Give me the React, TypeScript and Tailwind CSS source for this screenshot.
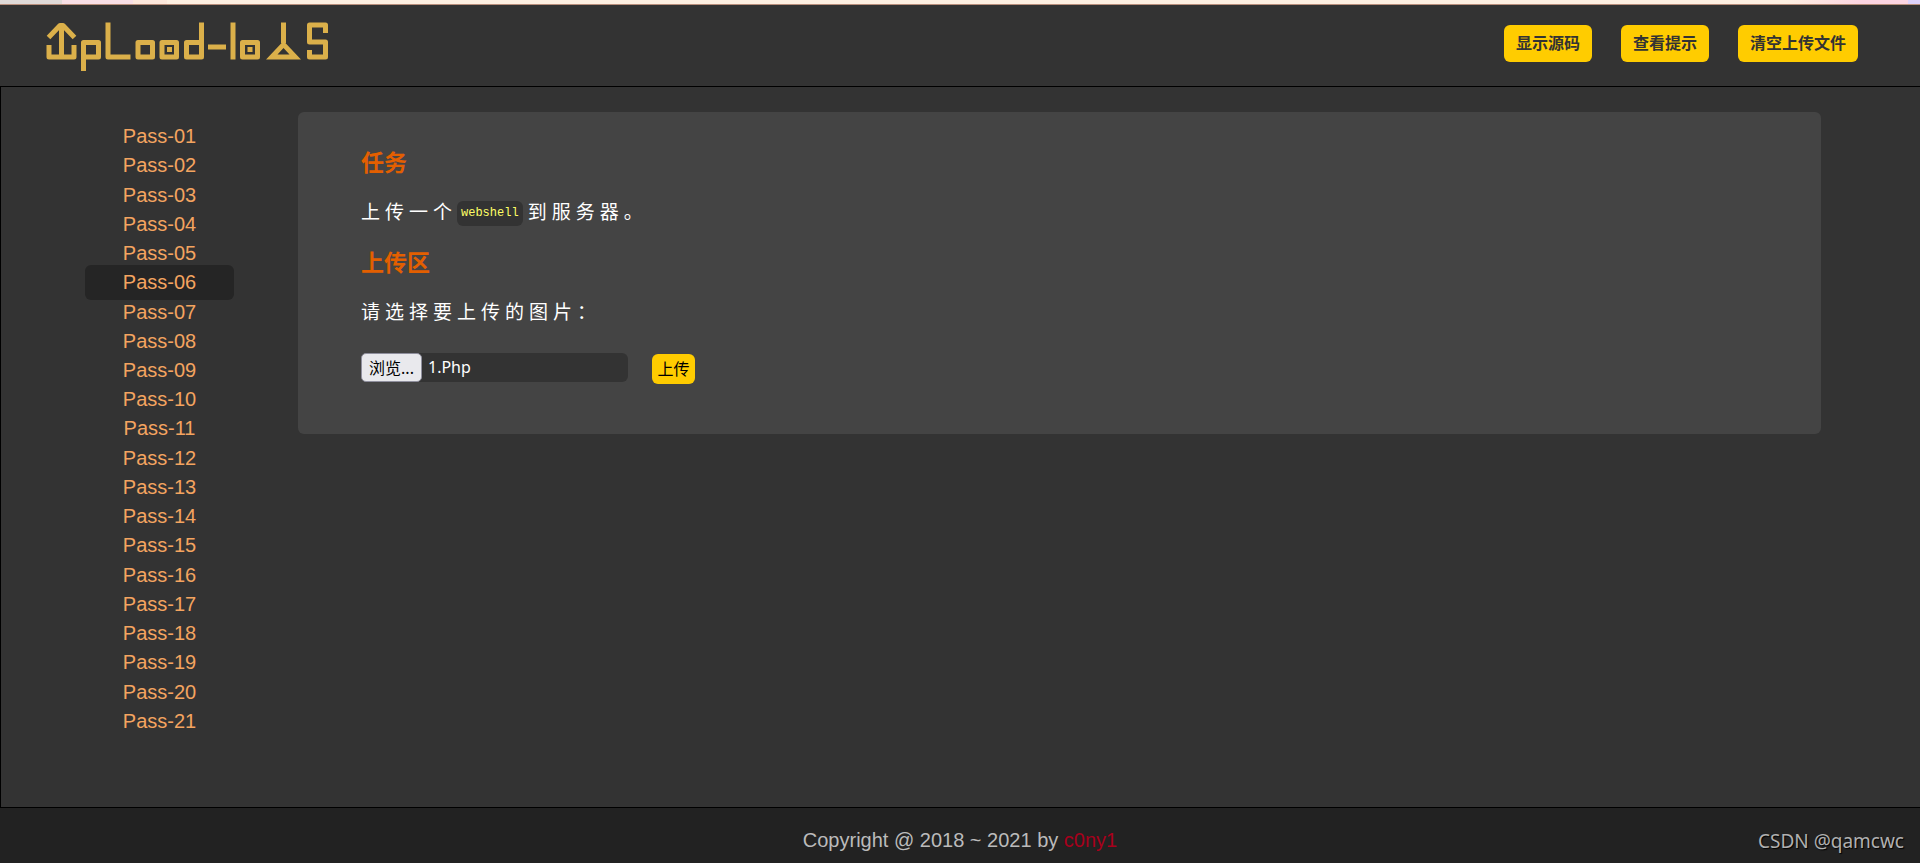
import React, {useRef, useState} from "react";

const passes = Array.from({length: 21}, (_, i) => `Pass-${String(i + 1).padStart(2, '0')}`)

const actions = ['显示源码', '查看提示', '清空上传文件']

const Logo: React.FC = () => (
    <svg
        className="w-[284px] h-[50px]"
        viewBox="46 22 284 50"
        fill="none"
        stroke="#dbb04a"
        strokeWidth="5"
        strokeLinejoin="round"
        role="img"
        aria-label="Upload-labs"
    >
        {/* up arrow in a tray */}
        <path d="M48.5 37.5L60 25.5H63L74.5 37.5M61.5 25V57"/>
        <path d="M49 45V57H74V45"/>
        <path d="M83.5 71V42.5H98.5V57H83.5"/>
        <path d="M108 22.5V57H130.5"/>
        <rect x="138" y="42.5" width="14.5" height="14.5"/>
        <rect x="162" y="42.5" width="14.5" height="14.5"/>
        <rect x="167" y="47" width="5" height="5" fill="#dbb04a" stroke="none"/>
        <path d="M201.5 22.5V57H186.5V42.5H201.5"/>
        <path d="M208 47H226"/>
        <path d="M233 22.5V59.5"/>
        <rect x="242.5" y="42.5" width="15" height="14.5"/>
        <rect x="247.5" y="47" width="5" height="5" fill="#dbb04a" stroke="none"/>
        {/* flask */}
        <path d="M283.5 22.5V43"/>
        <path d="M283.5 41L301 59.5H266ZM283.500 48L277.5 54.5H289.5Z" fill="#dbb04a" fillRule="evenodd" stroke="none"/>
        <path d="M325.5 33V25H309.5V42H325.5V57H309.5V50"/>
    </svg>
)

const Sidebar: React.FC<{ active: string, onSelect: (pass: string) => void }> = ({active, onSelect}) => (
    <nav className="w-[149px] shrink-0 pt-[35px]">
        <ul className="grid auto-rows-fr h-[614px]">
            {passes.map(pass => (
                <li key={pass} className="flex items-center">
                    <a
                        href={`#${pass}`}
                        onClick={() => onSelect(pass)}
                        className={`block w-full -my-1 rounded-md text-center text-[20px] leading-[35px] text-[#f4a460] ${pass === active ? 'bg-[#252525]' : ''}`}
                    >
                        {pass}
                    </a>
                </li>
            ))}
        </ul>
    </nav>
)

const UploadForm: React.FC = () => {
    const fileInput = useRef<HTMLInputElement>(null)
    const [fileName, setFileName] = useState('1.Php')

    const handleFileChange = (e: React.ChangeEvent<HTMLInputElement>) => {
        setFileName(e.target.files?.[0]?.name ?? '')
    }

    return (
        <form className="mt-[26px] flex items-start gap-6" onSubmit={e => e.preventDefault()}>
            <div className="flex h-[29px] w-[267px] items-stretch rounded-md bg-[#333]">
                <input
                    ref={fileInput}
                    id="upload_file"
                    type="file"
                    className="hidden"
                    onChange={handleFileChange}
                />
                <button
                    type="button"
                    onClick={() => fileInput.current?.click()}
                    className="w-[61px] shrink-0 rounded-[5px] border border-[#8f8f9d] bg-[#e9e9ed] text-[16px] leading-[26px] text-black"
                >
                    浏览...
                </button>
                <span className="truncate pl-[6px] text-[16px] leading-[29px] text-white">{fileName}</span>
            </div>
            <button type="submit" className="mt-px h-[30px] w-[43px] rounded-md bg-[#fc0] text-[16px] leading-[28px] text-black">
                上传
            </button>
        </form>
    )
}

export default function App() {
    const [active, setActive] = useState('Pass-06')

    return (
        <div className="flex min-h-screen flex-col bg-[#333] font-['Liberation_Sans','Noto_Sans_CJK_SC',sans-serif]">
            <div className="h-[5px] border-b border-[#b98f7c] bg-[linear-gradient(90deg,#e0dad8_0_62px,#f8dfe6_62px_133px,#fde8dc_133px_167px,#fef0e2_167px_93%,#fcd5e2_97%,#fcd5e2_99.4%,#ddd2fb_99.4%)]"/>
            <header className="flex h-[81px] items-start justify-between pl-[46px] pr-[62px]">
                <a href="#home" className="mt-[17px]"><Logo/></a>
                <div className="mt-5 flex gap-[29px]">
                    {actions.map(action => (
                        <button
                            key={action}
                            type="button"
                            className="h-[37px] rounded-md bg-[#fc0] px-3 text-[16px] font-bold text-[#333]"
                        >
                            {action}
                        </button>
                    ))}
                </div>
            </header>

            <main className="flex flex-1 items-start border-y border-l border-black pl-[84px] pr-[99px]">
                <Sidebar active={active} onSelect={setActive}/>
                <section className="ml-16 mt-[25px] flex-1 rounded-md bg-[#444] px-[63px] pb-[50px] pt-[35px] font-['Noto_Sans','Noto_Sans_CJK_SC',sans-serif]">
                    <div className="flex flex-col gap-5">
                        <h3 className="text-[23px] font-bold leading-[30px] text-[#e35f00]">任务</h3>
                        <p className="flex items-center text-[19px] leading-[30px] tracking-[5px] text-white">
                            上传一个
                            <code className="mr-[5px] mt-[3px] rounded-md bg-[#333] px-1 font-['Liberation_Mono',monospace] text-[12px] leading-[25px] tracking-normal text-[#ff6]">
                                webshell
                            </code>
                            到服务器。
                        </p>
                        <h3 className="text-[23px] font-bold leading-[30px] text-[#e35f00]">上传区</h3>
                        <label htmlFor="upload_file" className="text-[19px] leading-[30px] tracking-[5px] text-white">
                            请选择要上传的图片：
                        </label>
                    </div>
                    <UploadForm/>
                </section>
            </main>

            <footer className="relative h-[55px] bg-[#222] pt-[17px] text-center text-[20px] leading-[30px] text-[#bbb]">
                Copyright @ 2018 ~ 2021 by <a href="#c0ny1" className="text-[#a8001c]">c0ny1</a>
                <span className="absolute right-4 top-[18px] font-['Noto_Sans',sans-serif] text-[19px] text-[#b0b0b0] [text-shadow:1px_1px_1px_#000]">
                    CSDN @qamcwc
                </span>
            </footer>
        </div>
    )
}
